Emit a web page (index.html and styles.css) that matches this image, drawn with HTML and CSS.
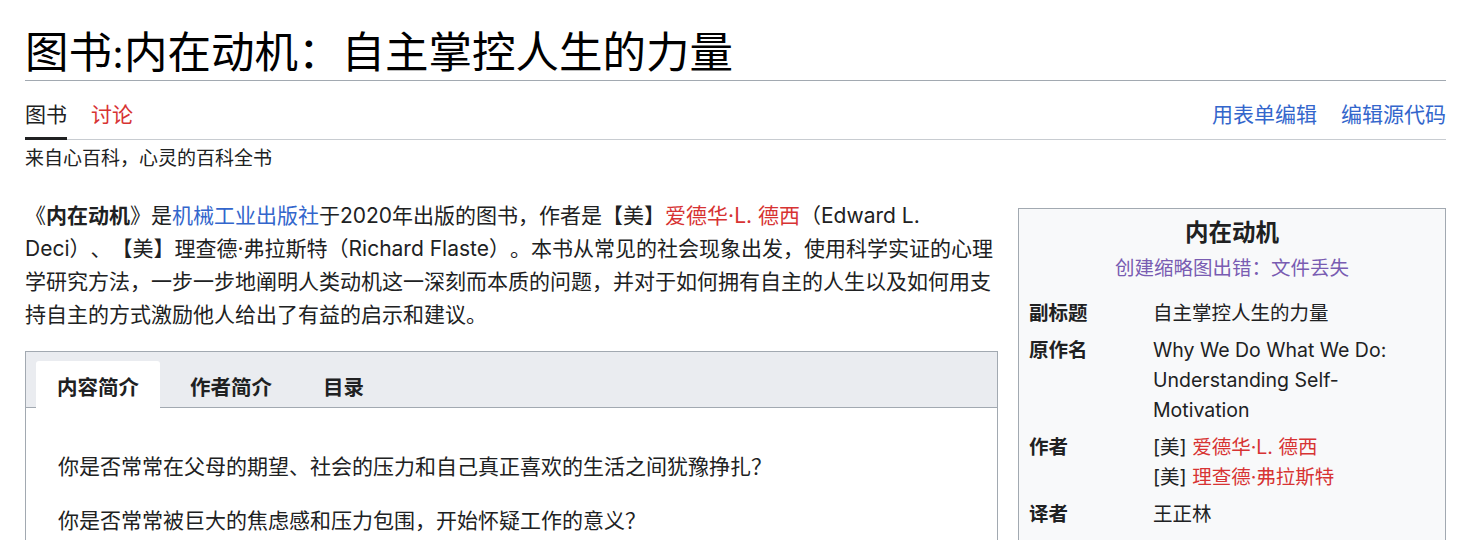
FILE: index.html
```html
<!DOCTYPE html>
<html lang="zh-CN">
<head>
<meta charset="utf-8">
<title>图书:内在动机：自主掌控人生的力量 - 心百科</title>
<link rel="stylesheet" href="styles.css">
</head>
<body>

<div id="page">

  <h1 id="firstHeading">图书:内在动机：自主掌控人生的力量</h1>

  <div id="tabs">
    <div class="tabs-left">
      <a class="tab selected" href="#">图书</a>
      <a class="tab new" href="#">讨论</a>
    </div>
    <div class="tabs-right">
      <a class="tab" href="#">用表单编辑</a>
      <a class="tab" href="#">编辑源代码</a>
    </div>
  </div>

  <div id="siteSub">来自心百科，心灵的百科全书</div>

  <div id="content">
    <div class="main">
      <p class="intro">《<b>内在动机</b>》是<a href="#">机械工业出版社</a>于2020年出版的图书，作者是【美】<a class="new" href="#">爱德华·L. 德西</a>（Edward L. Deci）、【美】理查德·弗拉斯特（Richard Flaste）。本书从常见的社会现象出发，使用科学实证的心理学研究方法，一步一步地阐明人类动机这一深刻而本质的问题，并对于如何拥有自主的人生以及如何用支持自主的方式激励他人给出了有益的启示和建议。</p>

      <div class="tabber">
        <div class="tabber-nav">
          <span class="tabber-tab active">内容简介</span>
          <span class="tabber-tab">作者简介</span>
          <span class="tabber-tab">目录</span>
        </div>
        <div class="tabber-panel">
          <p>你是否常常在父母的期望、社会的压力和自己真正喜欢的生活之间犹豫挣扎？</p>
          <p>你是否常常被巨大的焦虑感和压力包围，开始怀疑工作的意义？</p>
          <p>你是否常常发现，奖励和惩罚并不能真正激发孩子和员工的积极性？</p>
        </div>
      </div>
    </div>

    <table class="infobox">
      <tr><th colspan="2" class="infobox-title">内在动机</th></tr>
      <tr><td colspan="2" class="infobox-image"><a href="#">创建缩略图出错：文件丢失</a></td></tr>
      <tr><th>副标题</th><td>自主掌控人生的力量</td></tr>
      <tr><th>原作名</th><td>Why We Do What We Do: Understanding Self-Motivation</td></tr>
      <tr><th>作者</th><td>[美] <a class="new" href="#">爱德华·L. 德西</a><br>[美] <a class="new" href="#">理查德·弗拉斯特</a></td></tr>
      <tr><th>译者</th><td>王正林</td></tr>
      <tr><th>出版社</th><td><a href="#">机械工业出版社</a></td></tr>
    </table>
  </div>

</div>

</body>
</html>
```

FILE: styles.css
```css
html, body {
  margin: 0;
  padding: 0;
  background: #ffffff;
}

body {
  color: #202122;
  font-family: "Inter", "Noto Sans CJK SC", sans-serif;
  font-size: 21px;
  line-height: 33px;
  text-spacing-trim: space-all;
  overflow: hidden;
}

a {
  color: #3366cc;
  text-decoration: none;
}

a.new {
  color: #d73333;
}

#page {
  padding: 26px 20px 0 25px;
}

#firstHeading {
  margin: 0;
  font-family: "Liberation Serif", "Noto Sans CJK SC", serif;
  font-size: 43.5px;
  font-weight: normal;
  line-height: 54px;
  color: #000000;
  border-bottom: 1px solid #a2a9b1;
}

/* page tabs */
#tabs {
  display: flex;
  justify-content: space-between;
  align-items: flex-end;
  height: 58px;
  border-bottom: 1px solid #c8ccd1;
}

.tabs-left, .tabs-right {
  display: flex;
  gap: 24px;
}

.tab {
  display: block;
  padding-bottom: 12px;
  font-size: 21px;
  line-height: 24px;
}

.tabs-left .tab {
  color: #202122;
}

.tabs-left .tab.new {
  color: #d73333;
}

.tab.selected {
  border-bottom: 3px solid #202122;
  padding-bottom: 10px;
  margin-bottom: -1px;
}

#siteSub {
  margin-top: 7px;
  font-size: 19px;
  line-height: 24px;
}

/* content */
#content {
  display: flex;
  align-items: flex-start;
  gap: 20px;
  margin-top: 28px;
}

.main {
  flex: 1;
  min-width: 0;
}

.intro {
  margin: 0 0 20px;
}

.tabber {
  border: 1px solid #a2a9b1;
}

.tabber-nav {
  display: flex;
  background: #eaecf0;
  padding: 9px 10px 0;
  border-bottom: 1px solid #a2a9b1;
}

.tabber-tab {
  padding: 13px 21px 5px;
  font-size: 20.5px;
  font-weight: bold;
  line-height: 28px;
  border-radius: 3px 3px 0 0;
  margin-right: 9px;
}

.tabber-tab.active {
  background: #ffffff;
  margin-bottom: -1px;
  padding-bottom: 6px;
}

.tabber-panel {
  padding: 21px 32px 10px;
}

.tabber-panel p {
  margin: 21px 0;
}

/* infobox */
.infobox {
  width: 428px;
  flex: none;
  margin-top: 9px;
  border: 1px solid #a2a9b1;
  background: #f8f9fa;
  border-collapse: collapse;
  font-size: 19.5px;
  line-height: 30px;
}

.infobox th, .infobox td {
  text-align: left;
  vertical-align: top;
  padding: 3px 10px 4px;
}

.infobox th {
  width: 104px;
}

.infobox .infobox-title {
  text-align: center;
  font-size: 23.5px;
  padding-top: 9px;
  padding-bottom: 2px;
}

.infobox .infobox-image {
  text-align: center;
  padding-bottom: 12px;
}

.infobox-image a {
  color: #795cb2;
}
```
